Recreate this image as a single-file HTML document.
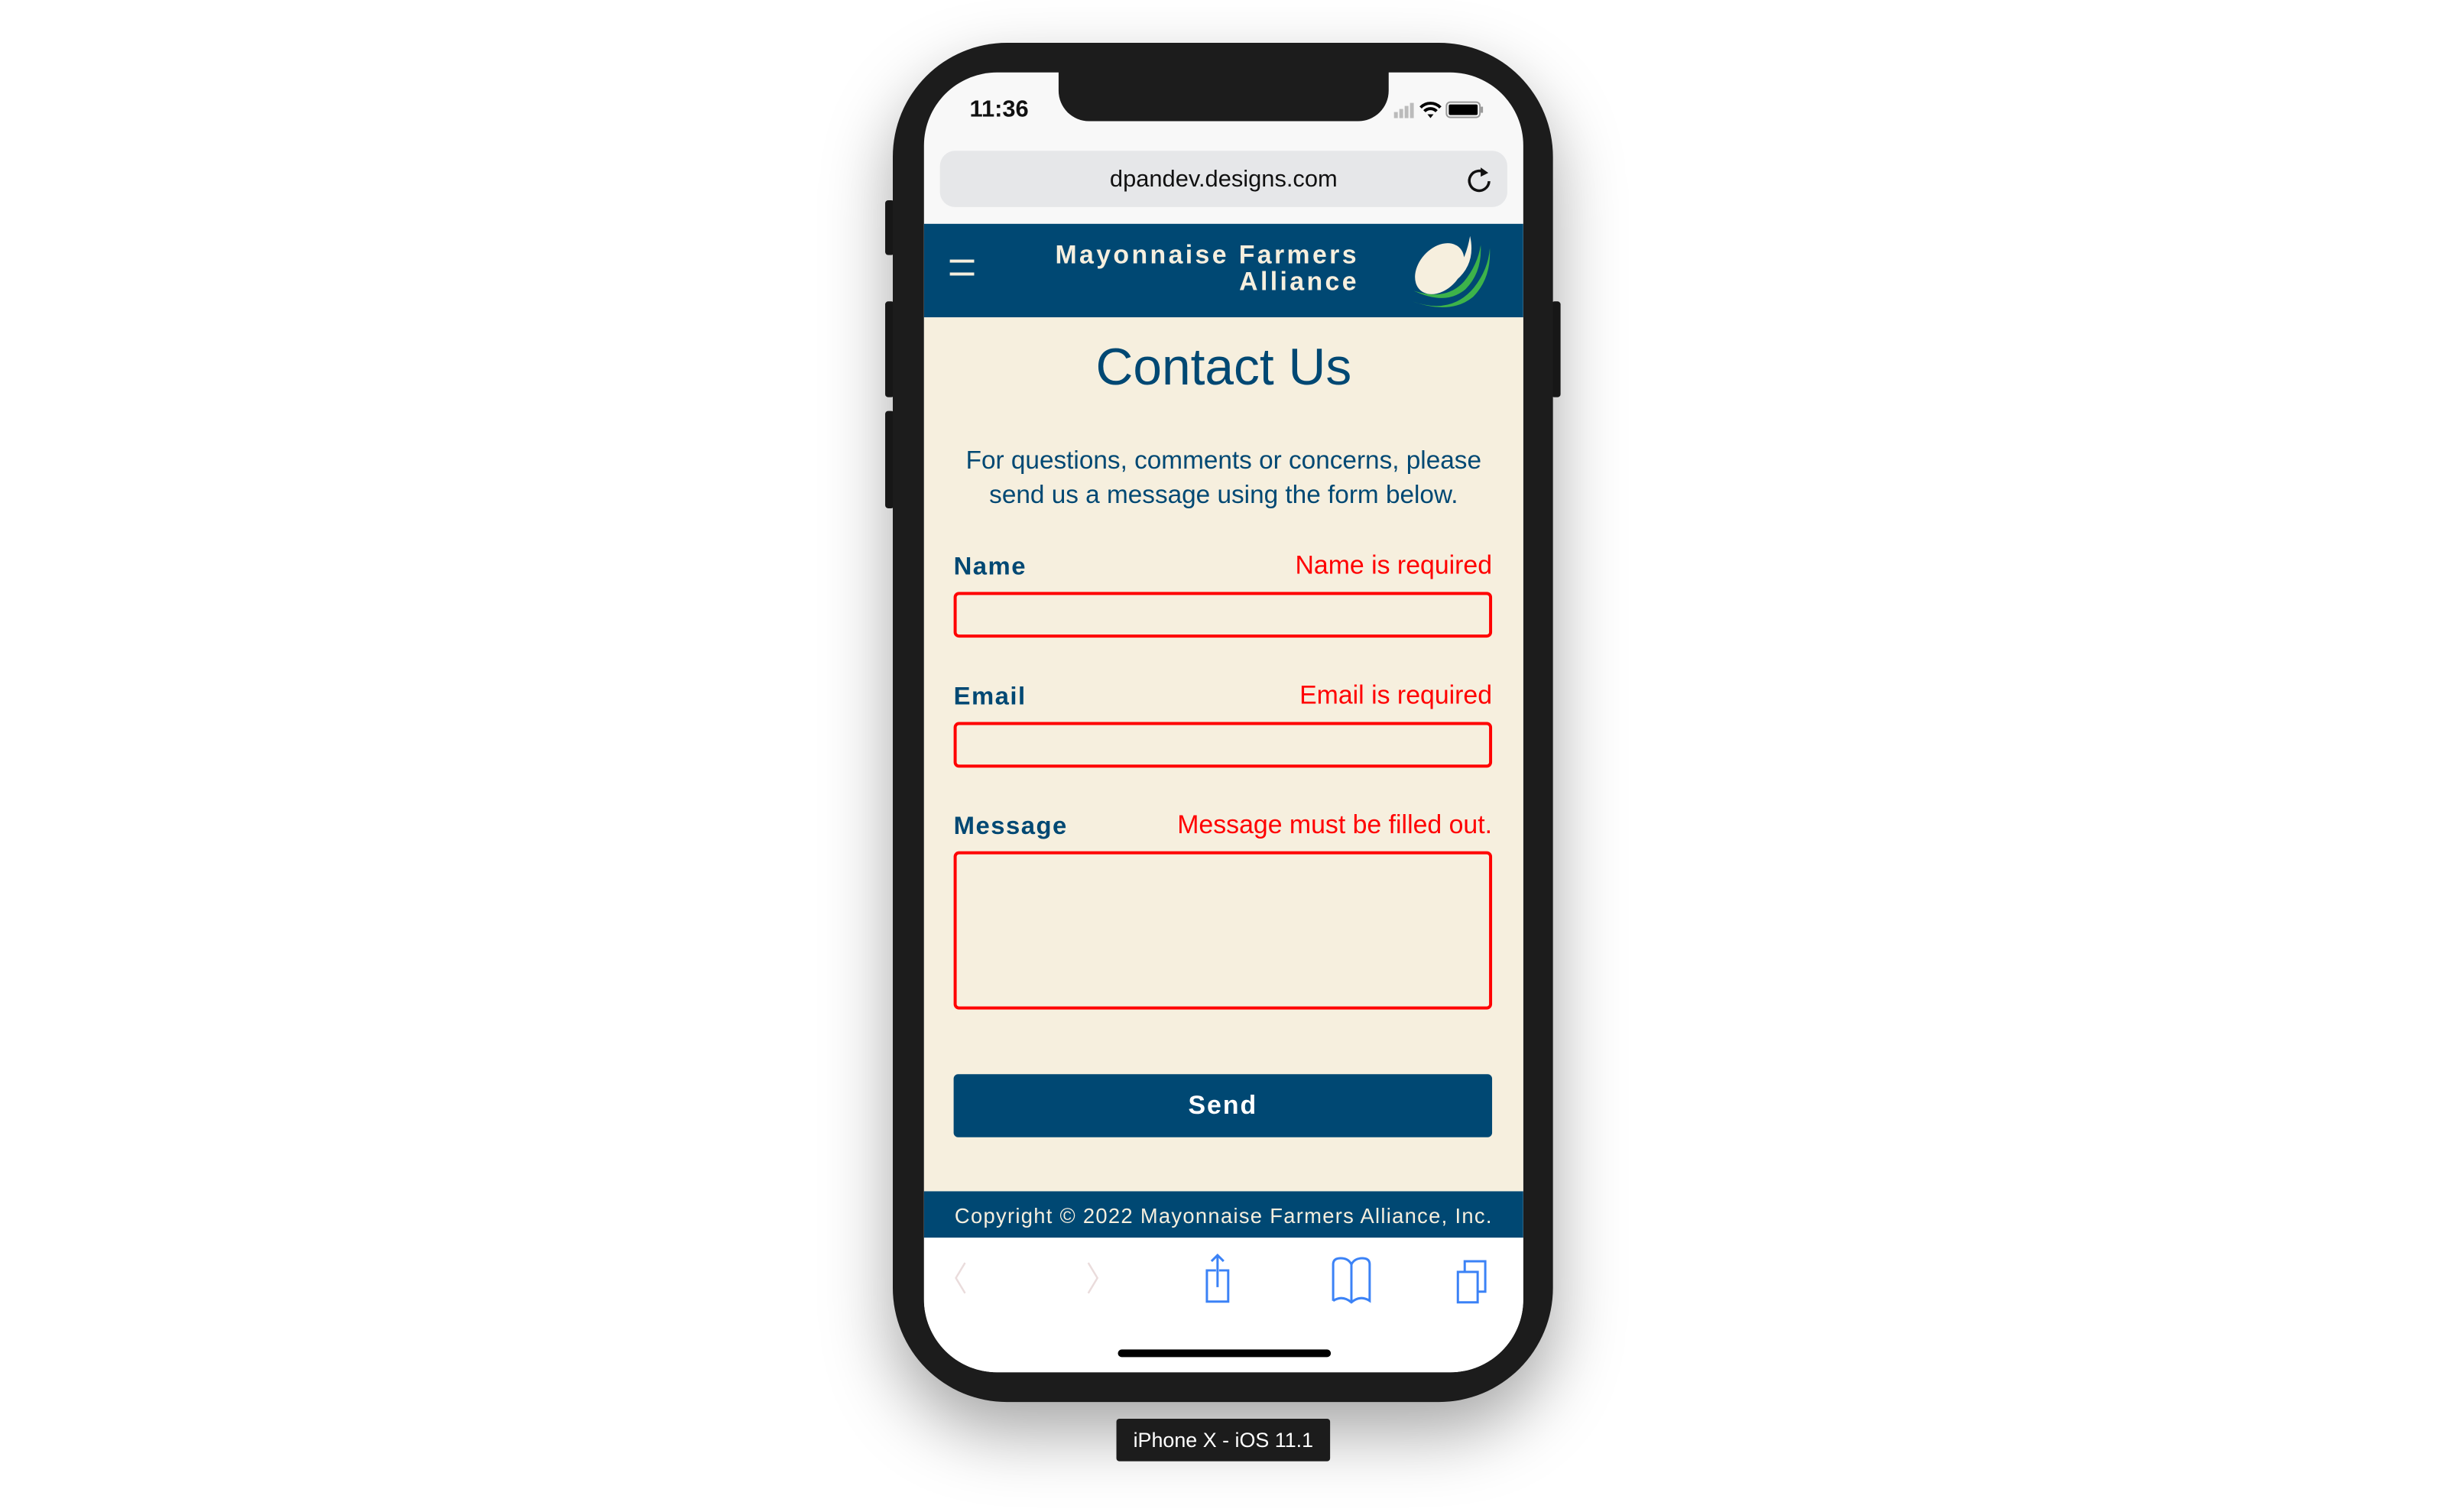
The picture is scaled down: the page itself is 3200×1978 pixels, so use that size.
<!DOCTYPE html>
<html><head><meta charset="utf-8"><style>
*{margin:0;padding:0;box-sizing:border-box}
body{width:3200px;height:1978px;background:#fff;position:relative;overflow:hidden;font-family:"Liberation Sans",sans-serif}
#w{position:absolute;left:0;top:0;width:3200px;height:1978px;transform-origin:1173px 53px;transform:translate(-5px,3px) scale(0.995)}
.abs{position:absolute}
.phone{left:1173px;top:53px;width:868px;height:1787px;background:#1c1c1c;border-radius:150px;box-shadow:0 40px 90px rgba(0,0,0,.35)}
.btn{background:#1c1c1c;border-radius:4px}
.screen{left:1214px;top:92px;width:788px;height:1709px;background:#f8f8f8;border-radius:96px;overflow:hidden}
.notch{left:1391px;top:80px;width:434px;height:76px;background:#1c1c1c;border-radius:0 0 40px 40px}
.blue{color:#004873}
.txt{white-space:nowrap}
.input{left:1253px;width:708px;border:4px solid #f00;border-radius:7px;background:#f6efde}
.lab{left:1253px;font-weight:bold;font-size:33px;color:#004873;letter-spacing:1.5px}
.err{right:1239px;font-size:34px;color:#f00;text-align:right}
</style></head><body><div id="w">
<div class="abs btn" style="left:1163px;top:260px;width:12px;height:72px"></div>
<div class="abs btn" style="left:1163px;top:393px;width:12px;height:126px"></div>
<div class="abs btn" style="left:1163px;top:537px;width:12px;height:128px"></div>
<div class="abs btn" style="left:2039px;top:393px;width:12px;height:126px"></div>
<div class="abs phone"></div>
<div class="abs screen">
  <div class="abs" style="left:0;top:199px;width:788px;height:123px;background:#004873"></div>
  <div class="abs" style="left:0;top:322px;width:788px;height:1149px;background:#f6efde"></div>
  <div class="abs" style="left:0;top:1471px;width:788px;height:61px;background:#004873"></div>
  <div class="abs" style="left:0;top:1532px;width:788px;height:177px;background:#fff"></div>
</div>
<div class="abs notch"></div>
<div class="abs txt" style="left:1274px;top:122px;font-size:31px;font-weight:bold;color:#111">11:36</div>
<svg class="abs" style="left:1830px;top:126px" width="140" height="30" viewBox="0 0 140 30">
<rect x="2" y="18" width="5" height="8" fill="#bbb"/><rect x="9" y="14" width="5" height="12" fill="#bbb"/><rect x="16" y="10" width="5" height="16" fill="#bbb"/><rect x="23" y="6" width="5" height="20" fill="#bbb"/>
<path d="M37 12 A18 18 0 0 1 63 12" stroke="#000" stroke-width="4" fill="none"/><path d="M42 17 A11 11 0 0 1 58 17" stroke="#000" stroke-width="4" fill="none"/><path d="M46 21 L50 26 L54 21 Z" fill="#000"/>
<rect x="71" y="5" width="44" height="20" rx="5" fill="none" stroke="#999" stroke-width="2"/><rect x="74" y="8" width="38" height="14" rx="2" fill="#000"/><rect x="116" y="11" width="3" height="8" fill="#999"/>
</svg>
<div class="abs" style="left:1235px;top:195px;width:746px;height:74px;background:#e6e7e9;border-radius:20px"></div>
<div class="abs txt" style="left:1235px;width:746px;top:214px;text-align:center;font-size:31px;color:#111">dpandev.designs.com</div>
<svg class="abs" style="left:1926px;top:213px" width="38" height="40" viewBox="0 0 38 40"><path d="M27 12 A13 13 0 1 0 31 22" stroke="#111" stroke-width="3.5" fill="none"/><path d="M20 4 L30 11 L20 16 Z" fill="#111"/></svg>
<div class="abs" style="left:1248px;top:338px;width:32px;height:4px;background:#f6efde"></div>
<div class="abs" style="left:1248px;top:355px;width:32px;height:4px;background:#f6efde"></div>
<div class="abs txt" style="right:1414px;top:315px;text-align:right;font-size:34px;line-height:35px;font-weight:bold;color:#f6efde;letter-spacing:3.4px">Mayonnaise Farmers<br>Alliance</div>
<svg class="abs" style="left:1852px;top:303px" width="115" height="100" viewBox="0 0 115 100">
<path d="M4 90 Q55 108 85 72 Q104 48 106 20 Q108 60 84 84 Q55 108 4 90 Z" fill="#3db34a"/>
<path d="M6 76 Q48 90 72 64 Q90 42 94 16 Q96 52 74 74 Q48 96 6 76 Z" fill="#3db34a"/>
<ellipse cx="40" cy="47" rx="27" ry="38" transform="rotate(42 40 47)" fill="#f6efde"/>
<path d="M80 4 Q88 40 62 62 Q50 72 40 74 Q72 50 80 4 Z" fill="#f6efde"/>
</svg>
<div class="abs txt blue" style="left:1214px;width:788px;top:440px;text-align:center;font-size:68px">Contact Us</div>
<div class="abs blue" style="left:1214px;width:788px;top:580px;text-align:center;font-size:33.5px;line-height:45px">For questions, comments or concerns, please<br>send us a message using the form below.</div>
<div class="abs lab txt" style="top:722px">Name</div>
<div class="abs err txt" style="top:721px">Name is required</div>
<div class="abs input" style="top:775px;height:60px"></div>
<div class="abs lab txt" style="top:893px">Email</div>
<div class="abs err txt" style="top:892px">Email is required</div>
<div class="abs input" style="top:946px;height:60px"></div>
<div class="abs lab txt" style="top:1063px">Message</div>
<div class="abs err txt" style="top:1062px">Message must be filled out.</div>
<div class="abs input" style="top:1116px;height:208px"></div>
<div class="abs" style="left:1253px;top:1409px;width:708px;height:83px;background:#004873;border-radius:6px;color:#fff;font-weight:bold;font-size:34px;text-align:center;line-height:83px;letter-spacing:2px">Send</div>
<div class="abs txt" style="left:1214px;width:788px;top:1580px;text-align:center;font-size:27.5px;color:#f6efde;letter-spacing:1.3px">Copyright © 2022 Mayonnaise Farmers Alliance, Inc.</div>
<svg class="abs" style="left:1240px;top:1645px" width="740" height="70" viewBox="0 0 740 70">
<path d="M28 12 L16 32 L28 52" stroke="#eadcdc" stroke-width="2.5" fill="none"/>
<path d="M190 12 L202 32 L190 52" stroke="#eadcdc" stroke-width="2.5" fill="none"/>
<g stroke="#3b82f6" stroke-width="3" fill="none">
<path d="M358 22 H346 V63 H374 V22 H362"/><path d="M360 2 V44"/><path d="M352 10 L360 2 L368 10"/>
<path d="M512 62 V14 Q512 6 522 6 Q532 6 536 14 Q540 6 550 6 Q560 6 560 14 V62 Q548 54 536 64 Q524 54 512 62 M536 14 V62"/>
<rect x="676" y="24" width="26" height="40"/><path d="M685 24 V10 H712 V50 H702"/>
</g></svg>
<div class="abs" style="left:1469px;top:1771px;width:280px;height:10px;background:#000;border-radius:5px"></div>
<div class="abs" style="left:1467px;top:1862px;width:281px;height:56px;background:#1c1c1c;border-radius:4px;color:#fff;font-size:27px;text-align:center;line-height:56px">iPhone X - iOS 11.1</div>
</div></body></html>
